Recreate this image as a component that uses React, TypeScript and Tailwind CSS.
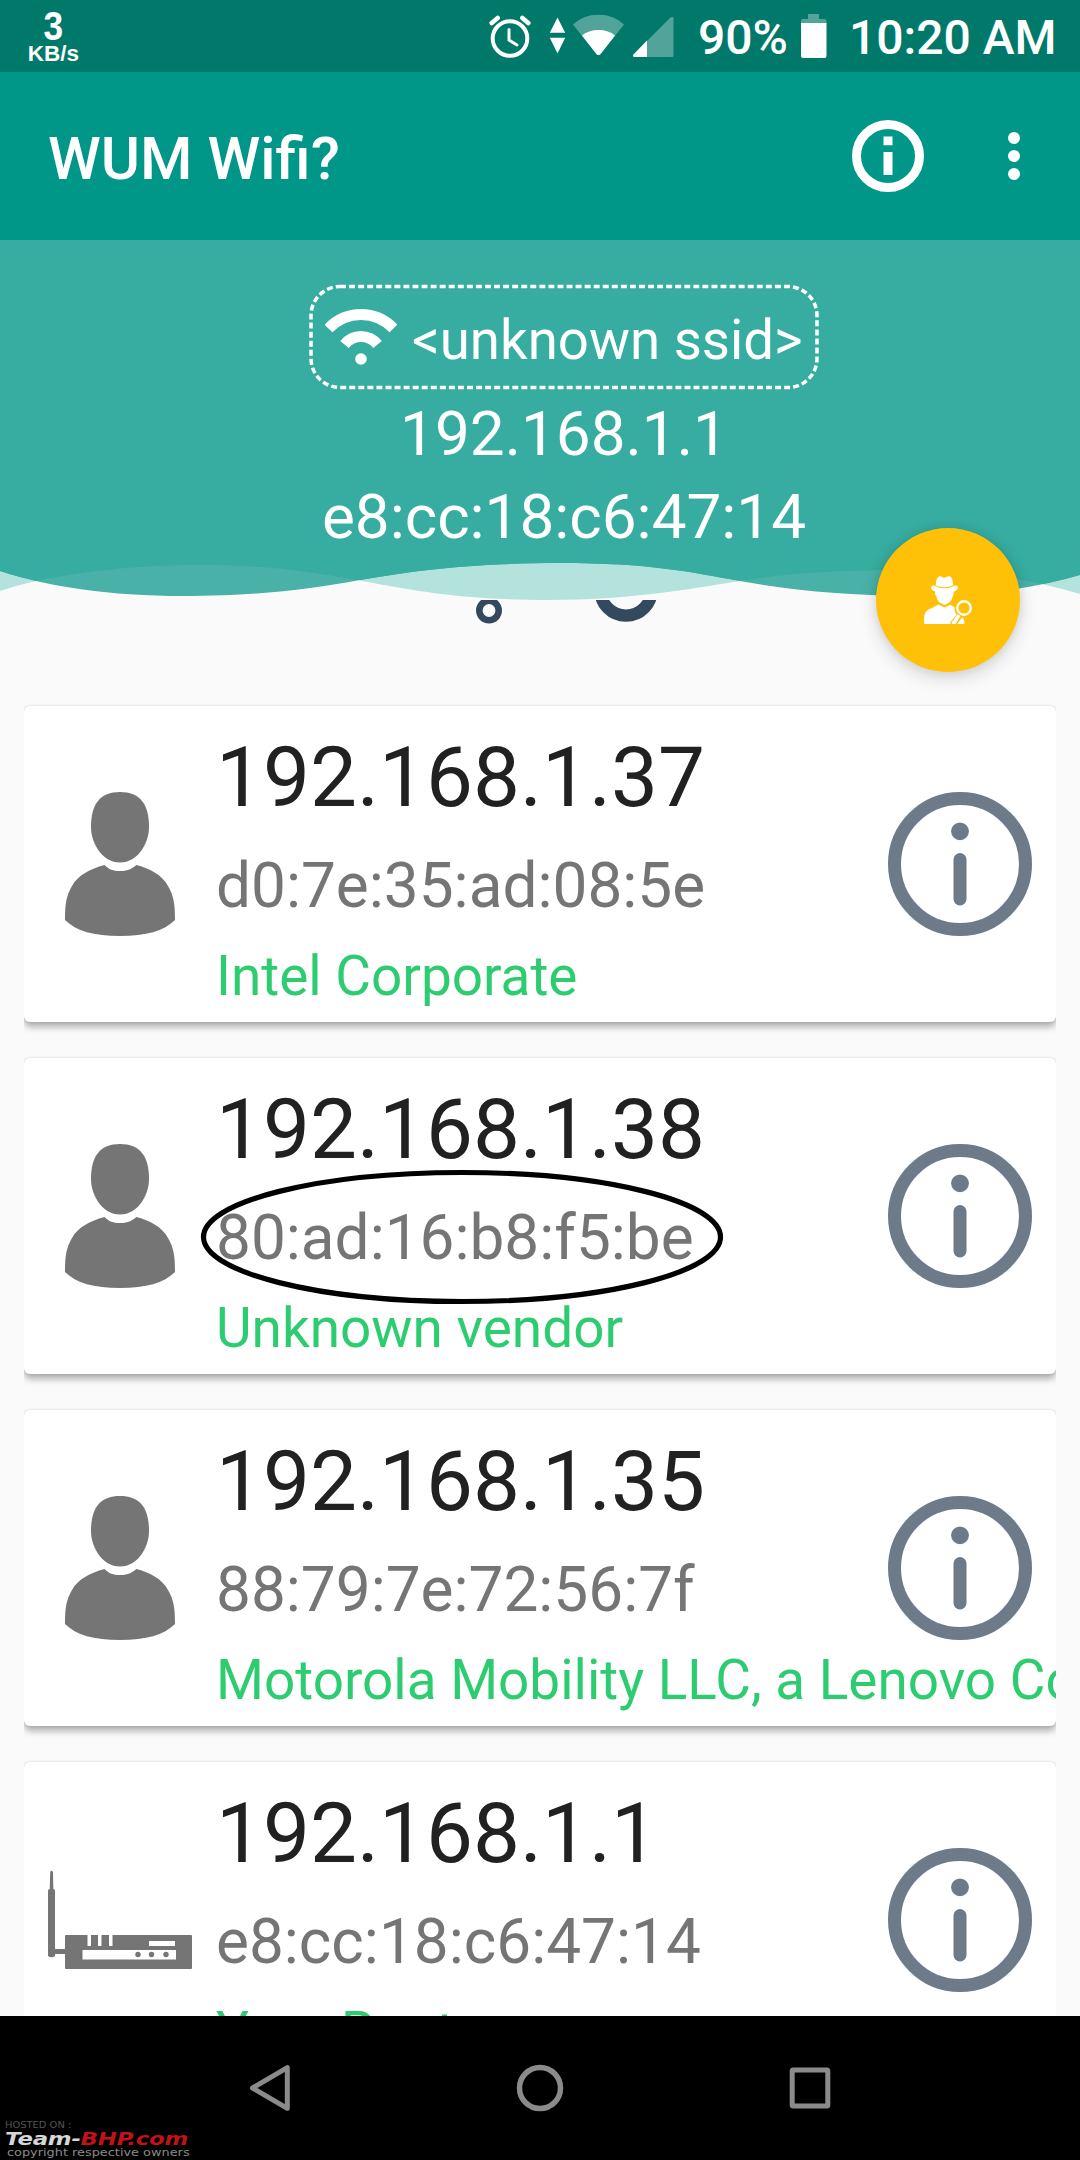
import React from "react";

type Device = { ip: string; mac: string; vendor: string; kind: "person" | "router"; marked?: boolean };

const devices: Device[] = [
  { ip: "192.168.1.37", mac: "d0:7e:35:ad:08:5e", vendor: "Intel Corporate", kind: "person" },
  { ip: "192.168.1.38", mac: "80:ad:16:b8:f5:be", vendor: "Unknown vendor", kind: "person", marked: true },
  { ip: "192.168.1.35", mac: "88:79:7e:72:56:7f", vendor: "Motorola Mobility LLC, a Lenovo Company", kind: "person" },
  { ip: "192.168.1.1", mac: "e8:cc:18:c6:47:14", vendor: "Your Router", kind: "router" },
];

function StatusBar() {
  return (
    <div className="flex h-[72px] shrink-0 items-center bg-[#00796b] text-white">
      <div className="ml-[27px] flex w-[53px] flex-col items-center font-['Liberation_Sans',sans-serif] font-bold">
        <span className="mb-[3px] inline-block scale-x-[0.86] text-[41px] leading-[32px]">3</span>
        <span className="text-[22.5px] leading-[18px]">KB/s</span>
      </div>
      <svg className="ml-[408px] shrink-0" width="188" height="72" viewBox="488 0 188 72">
        <g fill="none" stroke="#fff">
          <circle cx="510" cy="38.5" r="17.3" strokeWidth="4" />
          <path d="M509 29.5v10.5l8 5" strokeWidth="3" strokeLinecap="round" />
          <path d="M491.700 23l6-5M528.300 23l-6-5" strokeWidth="4.500" strokeLinecap="round" />
        </g>
        <path d="M557.500 17.500l7.700 15.300h-15.400zM557.500 53.500l7.700-15.700h-15.400z" fill="#fff" />
        <path d="M598.500 55q-1.500 0-2.500-1.500L573 24.500q10-9.800 25.500-9.800t25.500 9.800l-23 29q-1 1.500-2.500 1.500z" fill="#fff" opacity=".32" />
        <path d="M598.500 55q-1.500 0-2.500-1.500L582 35.500q6.500-5.500 16.500-5.500t16.500 5.500l-14 18q-1 1.500-2.500 1.500z" fill="#fff" />
        <path d="M634.500 57q-2.500-.5-1-2.500L670.500 17.500q3-2 3 1V55.500q0 1.500-1.500 1.500z" fill="#fff" opacity=".32" />
        <path d="M634.500 57q-2.500-.5-1-2.500L647 40.500V57z" fill="#fff" />
      </svg>
      <span className="ml-[22px] mt-[3px] w-[89px] text-[48px] font-medium leading-[72px]">90%</span>
      <svg className="ml-[14px] shrink-0" width="26" height="72" viewBox="801 0 26 72">
        <path d="M808 14h11v5h5.500q2 0 2 2V24h-25.500V21q0-2 2-2h5z" fill="#fff" opacity=".32" />
        <path d="M801 23h25.500v33q0 2-2 2h-21.500q-2 0-2-2z" fill="#fff" />
      </svg>
      <span className="ml-[22px] mt-[3px] whitespace-nowrap text-[48px] font-medium leading-[72px]">10:20 AM</span>
    </div>
  );
}

function AppBar() {
  return (
    <div className="flex h-[168px] shrink-0 items-center bg-[#009688] pl-[48px] text-white">
      <h1 className="mt-[6px] flex-1 text-[60px] font-medium leading-[72px]">WUM Wifi?</h1>
      <svg className="shrink-0" width="72" height="72" viewBox="0 0 72 72">
        <circle cx="36" cy="36" r="31.500" fill="none" stroke="#fff" strokeWidth="9" />
        <path d="M31.500 16.500h9v8.700h-9zM31.500 32h9v23h-9z" fill="#fff" />
      </svg>
      <svg className="ml-[84px] mr-[60px] shrink-0" width="12" height="48" viewBox="0 0 12 48" fill="#fff">
        <circle cx="6" cy="6" r="6" />
        <circle cx="6" cy="24" r="6" />
        <circle cx="6" cy="42" r="6" />
      </svg>
    </div>
  );
}

function Waves() {
  const front =
    "M0 0H1080V335C1030 349 980 356 920 356C850 356 790 350 740 341C690 332 650 323 560 323C470 323 410 331 360 340C310 349 260 356 183 356C110 356 50 347 0 331Z";
  const back =
    "M0 0H1080V354C1020 337 975 330 905 330C840 330 790 333 740 341C690 349 630 360 548 360C460 360 410 350 355 339.500C310 332 265 325 205 325C130 325 80 332 36 341Q18 345 0 351Z";
  return (
    <svg className="absolute inset-0" width="1080" height="360" viewBox="0 0 1080 360">
      <defs>
        <clipPath id="frontWave">
          <path d={front} />
        </clipPath>
      </defs>
      <path d={back} fill="#b4e2dc" />
      <path d={front} fill="#49b1a8" />
      <path d={back} fill="#37aca0" clipPath="url(#frontWave)" />
    </svg>
  );
}

function NetworkHeader() {
  return (
    <div className="relative h-[360px] shrink-0">
      <Waves />
      <div className="relative flex flex-col items-center pl-[48px] pt-[44px] text-white">
        <div className="relative flex h-[106px] w-[510px] items-center">
          <svg className="absolute inset-0" width="510" height="106" viewBox="0 0 510 106">
            <rect x="2" y="2.500" width="506" height="101" rx="29" fill="none" stroke="#fff" strokeWidth="3.500" strokeDasharray="6 3.060" />
          </svg>
          <svg className="ml-[16px] shrink-0" width="72" height="56" viewBox="0 0 72 56">
            <g fill="none" stroke="#fff" strokeWidth="11">
              <path d="M3.500 19.500Q17 5.500 36 5.500T68.500 19.500" strokeLinejoin="round" />
              <path d="M19.500 35.500Q26 27.500 36 27.500T52.500 35.500" />
            </g>
            <circle cx="36" cy="50" r="5.800" fill="#fff" />
          </svg>
          <span className="ml-[15px] mt-[6px] whitespace-nowrap text-[54.6px] leading-[64px]">&lt;unknown ssid&gt;</span>
        </div>
        <span className="mt-[6px] text-[62px] leading-[75px]">192.168.1.1</span>
        <span className="mt-[8px] text-[62px] leading-[75px]">e8:cc:18:c6:47:14</span>
      </div>
    </div>
  );
}

function PersonIcon() {
  return (
    <svg className="shrink-0" width="144" height="144" viewBox="0 0 144 144" fill="#757575">
      <path d="M72 0C92 0 101 12 101 35C101 51 90 70.500 72 70.500S43 51 43 35C43 12 52 0 72 0Z" />
      <path d="M56.500 73C61 77.500 65 79 72 79S83 77.500 88.500 73C103 77 114 83 120 94C126 104 127 113 127 128C116 139 98 144 72 144S28 139 17 128C17 113 18 104 24 94C30 83 42 77 56.500 73Z" />
    </svg>
  );
}

function RouterIcon() {
  return (
    <svg className="shrink-0" width="144" height="144" viewBox="0 0 144 144">
      <g fill="#757575">
        <path d="M2.200 24q1.400-2.400 2.800 0L5.300 41q1.700 0 1.700 2v58h10v-13q0-1 1-1h125q1 0 1 1v32q0 1-1 1H18q-1 0-1-1v-14H7v2q-3.500 2.500-7 0V43q0-2 1.700-2z" />
      </g>
      <path d="M39.500 86.500h3.500v11.500h-3.500zM50 86.500h3.500v11.500H50zM61 86.500h3.500v11.500H61zM101 93h26v5h-26zM34.500 102H128v9.500H34.500z" fill="#fff" />
      <g fill="#757575">
        <circle cx="90" cy="106.500" r="2.700" />
        <circle cx="103.500" cy="106.500" r="2.700" />
        <circle cx="118" cy="106.500" r="2.700" />
      </g>
    </svg>
  );
}

function InfoIcon() {
  return (
    <svg width="144" height="144" viewBox="0 0 144 144" fill="#6c7a89">
      <circle cx="72" cy="72" r="65.500" fill="none" stroke="#6c7a89" strokeWidth="13" />
      <circle cx="72" cy="39.300" r="8.900" />
      <rect x="65.500" y="61" width="13" height="52.500" rx="6.500" />
    </svg>
  );
}

function DeviceCard({ device }: { device: Device }) {
  return (
    <div className="relative flex h-[316px] shrink-0 items-center rounded-[6px] bg-white pl-[24px] shadow-[0_5px_7px_rgba(0,0,0,0.3),0_0_3px_rgba(0,0,0,0.12)]">
      {device.kind === "person" ? <PersonIcon /> : <RouterIcon />}
      <div className="relative flex h-full min-w-0 flex-1 flex-col overflow-hidden whitespace-nowrap pl-[24px] pt-[22px]">
        <span className="text-[83.6px] leading-[99px] text-[#212121]">{device.ip}</span>
        <span className="mt-[21px] text-[62.1px] leading-[75px] text-[#757575]">{device.mac}</span>
        <span className="mt-[21px] text-[54.9px] leading-[64px] text-[#2ecc71]">{device.vendor}</span>
      </div>
      <div className="absolute right-[24px] top-[86px]">
        <InfoIcon />
      </div>
      {device.marked && (
        <svg className="absolute left-[176px] top-[111px]" width="524" height="136" viewBox="0 0 524 136">
          <ellipse cx="262" cy="68" rx="258.500" ry="64.500" fill="none" stroke="#000" strokeWidth="5.200" />
        </svg>
      )}
    </div>
  );
}

function SpyIcon() {
  return (
    <svg width="48" height="48" viewBox="0 0 48 48" fill="#fff">
      <path d="M11.700 9.500Q11.500 4 14 1Q16-.5 18 1Q20.300 2.500 22.500 1Q24.500-.5 27 1Q29.300 4 29 9.500Q20.300 13 11.700 9.500Z" />
      <path d="M7 11.500Q7.500 9 10.500 9.700Q20.300 14.800 30.500 9.700Q33.500 9 34 11.500Q33.500 14.500 29.700 15.500Q30.500 18 28.500 21Q27.500 26.500 20.300 29Q13.500 26.500 12.500 21Q10.300 18 11.300 15.500Q7.500 14.500 7 11.500Z" />
      <path d="M0 48V43Q0 34 8 32L14.500 28.500L20.300 31.500L26.500 28.800Q29.500 31 30.500 31Q30.500 36.500 32.500 38.500L26.500 46V48Z" />
      <circle cx="40" cy="32" r="6.700" fill="none" stroke="#fff" strokeWidth="2.400" />
      <path d="M33.300 38.200L36.500 40L31.500 48H28L27.800 46.300Z" />
      <path d="M37.500 42L38.300 41.200Q40.500 43 40.500 48H33.300Z" />
    </svg>
  );
}

function NavBar() {
  return (
    <div className="relative flex h-[144px] shrink-0 items-center bg-black">
      <div className="grid w-full grid-cols-[270px_270px_270px] justify-center justify-items-center">
        <svg width="48" height="48" viewBox="0 0 48 48" fill="none" stroke="#8b8b8b">
          <path d="M6.500 24L41.300 3.700V44.300Z" strokeWidth="5" strokeLinejoin="round" />
        </svg>
        <svg width="48" height="48" viewBox="0 0 48 48" fill="none" stroke="#8b8b8b">
          <circle cx="24" cy="24" r="20.500" strokeWidth="5.500" />
        </svg>
        <svg width="48" height="48" viewBox="0 0 48 48" fill="none" stroke="#8b8b8b">
          <rect x="6.200" y="6" width="35.600" height="36" rx="1" strokeWidth="5" />
        </svg>
      </div>
      <div className="absolute bottom-[2px] left-[5px] flex flex-col whitespace-nowrap font-['DejaVu_Sans',sans-serif]">
        <span className="origin-left scale-x-[1.1] text-[9px] leading-[9px] text-[#555]">HOSTED ON :</span>
        <span className="flex h-[17px] origin-left scale-x-[1.27] items-center text-[18px] font-bold italic leading-[17px] tracking-[-0.2px] text-[#d6d6d6]">
          Team-<span className="text-[#c01218]">BHP.com</span>
        </span>
        <span className="ml-[2px] origin-left scale-x-[1.17] text-[11px] leading-[11px] text-[#8a8a8a]">copyright respective owners</span>
      </div>
    </div>
  );
}

export default function App() {
  return (
    <div className="flex h-[2160px] w-[1080px] flex-col overflow-hidden bg-[#fafafa] font-[Roboto,sans-serif]">
      <StatusBar />
      <AppBar />
      <div className="relative flex h-[1776px] shrink-0 flex-col">
        <NetworkHeader />
        <div className="mx-[24px] flex min-h-0 flex-1 flex-col gap-[36px] overflow-hidden">
          <svg className="-mb-[36px] h-[106px] shrink-0" width="1032" height="106" viewBox="24 600 1032 106" fill="none" stroke="#34495e">
            <circle cx="489" cy="610.500" r="9.700" strokeWidth="6.600" />
            <circle cx="626" cy="590" r="25.600" strokeWidth="12.300" />
          </svg>
          {devices.map((d) => (
            <DeviceCard key={d.ip} device={d} />
          ))}
        </div>
        <button className="absolute left-[876px] top-[288px] flex size-[144px] items-center justify-center rounded-full bg-[#ffc107] shadow-[0_6px_18px_rgba(0,0,0,0.15),0_0_10px_rgba(0,0,0,0.08)]">
          <SpyIcon />
        </button>
      </div>
      <NavBar />
    </div>
  );
}
